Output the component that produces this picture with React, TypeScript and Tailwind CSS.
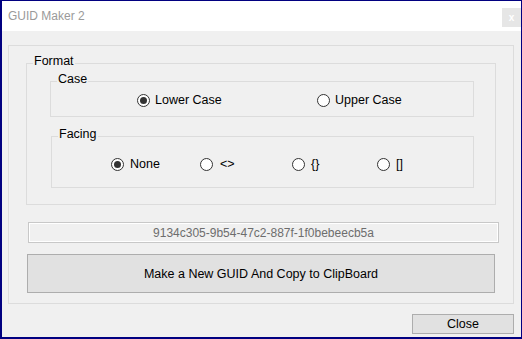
import React from "react";

function Radio({ checked, label, gap }: { checked?: boolean; label: string; gap: string }) {
  return (
    <div className="flex items-center">
      <span className="w-[13px] h-[13px] rounded-full border border-[#333333] bg-white flex items-center justify-center shrink-0">
        {checked && <span className="w-[7px] h-[7px] rounded-full bg-[#333333]" />}
      </span>
      <span className={`${gap} text-[12.5px] leading-[14px] text-black whitespace-nowrap`}>{label}</span>
    </div>
  );
}

function Group({ label, className, children }: { label: string; className: string; children?: React.ReactNode }) {
  return (
    <div className={`relative border border-[#dcdcdc] ${className}`}>
      <span className="absolute top-[-10px] left-[6px] px-[1px] bg-[#f0f0f0] text-[12.5px] leading-[14px] text-black">
        {label}
      </span>
      {children}
    </div>
  );
}

export default function App() {
  return (
    <div
      className="w-[522px] h-[339px] flex flex-col border-solid border-[#010080] border-t border-r border-l-2 border-b-2 bg-[#f0f0f0]"
      style={{ fontFamily: '"Liberation Sans", Arial, sans-serif' }}
    >
      <div className="h-[30px] bg-white flex shrink-0">
        <div className="flex-1 flex items-center pl-[6px] text-[12px] leading-[14px] text-[#9a9a9a]">GUID Maker 2</div>
        <div className="mt-[7px] w-[19px] h-[19px] bg-[#e6e6e6] flex items-center justify-center text-white text-[10px] leading-none font-bold">
          x
        </div>
      </div>
      <div className="flex-1 flex flex-col pt-[14px] pl-[6px] pr-[7px] pb-[3px]">
        <div className="w-[506px] h-[259px] border border-[#dcdcdc] flex flex-col pt-[17px]">
          <Group label="Format" className="ml-[17px] w-[470px] h-[142px] flex flex-col pt-[17px]">
            <Group label="Case" className="ml-[23px] w-[424px] h-[36px] flex">
              <div className="flex items-center pl-[86px] pt-[2px] h-full">
                <div className="w-[180px]">
                  <Radio checked label="Lower Case" gap="ml-[5px]" />
                </div>
                <div>
                  <Radio label="Upper Case" gap="ml-[5px]" />
                </div>
              </div>
            </Group>
            <Group label="Facing" className="mt-[19px] ml-[24px] w-[423px] h-[52px] flex">
              <div className="flex items-center pl-[59px] pt-[4px] h-full">
                <div className="w-[89px]">
                  <Radio checked label="None" gap="ml-[6px]" />
                </div>
                <div className="w-[92px]">
                  <Radio label="<>" gap="ml-[7px]" />
                </div>
                <div className="w-[85px]">
                  <Radio label="{}" gap="ml-[6px]" />
                </div>
                <div>
                  <Radio label="[]" gap="ml-[6px]" />
                </div>
              </div>
            </Group>
          </Group>
          <div className="mt-[17px] ml-[19px] w-[471px] h-[21px] border border-[#c8c8c8] shadow-[inset_0_0_0_1px_#ffffff] flex items-center justify-center text-[12px] leading-[14px] text-[#6d6d6d]">
            9134c305-9b54-47c2-887f-1f0bebeecb5a
          </div>
          <div className="mt-[11px] ml-[18px] w-[468px] h-[39px] border border-[#adadad] bg-[#e1e1e1] flex items-center justify-center text-[12.5px] leading-[14px] text-black">
            Make a New GUID And Copy to ClipBoard
          </div>
        </div>
        <div className="mt-[10px] self-start ml-[404px] w-[102px] h-[20px] border border-[#adadad] bg-[#e1e1e1] flex items-center justify-center text-[12.5px] leading-[14px] text-black">
          Close
        </div>
      </div>
    </div>
  );
}
